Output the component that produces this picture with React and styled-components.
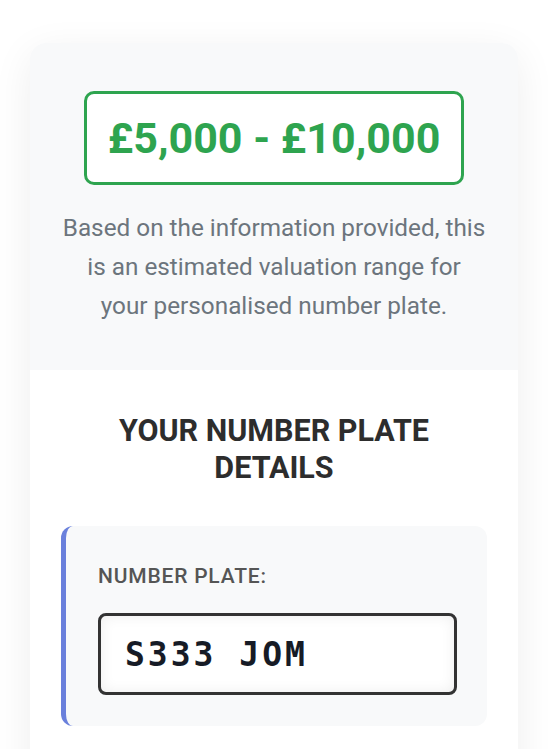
import styled, { createGlobalStyle } from 'styled-components';

const GlobalStyle = createGlobalStyle`
  html, body {
    margin: 0;
    padding: 0;
    background: #ffffff;
    font-family: Roboto, "Noto Sans", "Liberation Sans", sans-serif;
  }
`;

const Page = styled.div`
  padding: 43px 30px 0;
  height: 749px;
  box-sizing: border-box;
  overflow: hidden;
`;

const Card = styled.section`
  background: #ffffff;
  border-radius: 16px;
  box-shadow: 0 10px 40px rgba(0, 0, 0, 0.07);
  overflow: hidden;
`;

const Summary = styled.div`
  background: #f8f9fa;
  padding: 48px 30px 45px;
  display: flex;
  flex-direction: column;
  align-items: center;
`;

const PriceBox = styled.div`
  width: 380px;
  height: 94px;
  box-sizing: border-box;
  border: 3px solid #2ea44f;
  border-radius: 10px;
  background: #ffffff;
  display: flex;
  align-items: center;
  justify-content: center;
  color: #2ea44f;
  font-size: 43px;
  font-weight: 700;
`;

const Note = styled.p`
  margin: 23px 0 0;
  text-align: center;
  color: #6c757d;
  font-size: 24.3px;
  line-height: 39px;
  max-width: 424px;
`;

const Details = styled.div`
  padding: 43px 31px 80px;
`;

const Heading = styled.h2`
  margin: 0 auto 40px;
  max-width: 380px;
  text-align: center;
  color: #2d2d2d;
  font-size: 30.5px;
  font-weight: 700;
  line-height: 36.5px;
  text-transform: uppercase;
`;

const Field = styled.div`
  background: #f8f9fa;
  border-left: 5px solid #6a80dc;
  border-radius: 12px;
  padding: 36px 30px 31px 32px;
`;

const Label = styled.div`
  color: #555555;
  font-size: 21px;
  font-weight: 500;
  letter-spacing: 0.8px;
  line-height: 28px;
  text-transform: uppercase;
`;

const Plate = styled.div`
  margin-top: 23px;
  height: 82px;
  box-sizing: border-box;
  border: 3px solid #333333;
  border-radius: 8px;
  background: #ffffff;
  box-shadow: inset 0 0 14px rgba(0, 0, 0, 0.07);
  display: flex;
  align-items: center;
  padding-left: 24px;
  color: #161b26;
  font-family: "DejaVu Sans Mono", "Liberation Mono", monospace;
  font-size: 33px;
  font-weight: 700;
  letter-spacing: 3px;
`;

export default function App() {
  return (
    <>
      <GlobalStyle />
      <Page>
        <Card>
          <Summary>
            <PriceBox>£5,000 - £10,000</PriceBox>
            <Note>
              Based on the information provided, this is an estimated valuation range for
              your personalised number plate.
            </Note>
          </Summary>
          <Details>
            <Heading>Your Number Plate Details</Heading>
            <Field>
              <Label>Number Plate:</Label>
              <Plate>S333 JOM</Plate>
            </Field>
          </Details>
        </Card>
      </Page>
    </>
  );
}
